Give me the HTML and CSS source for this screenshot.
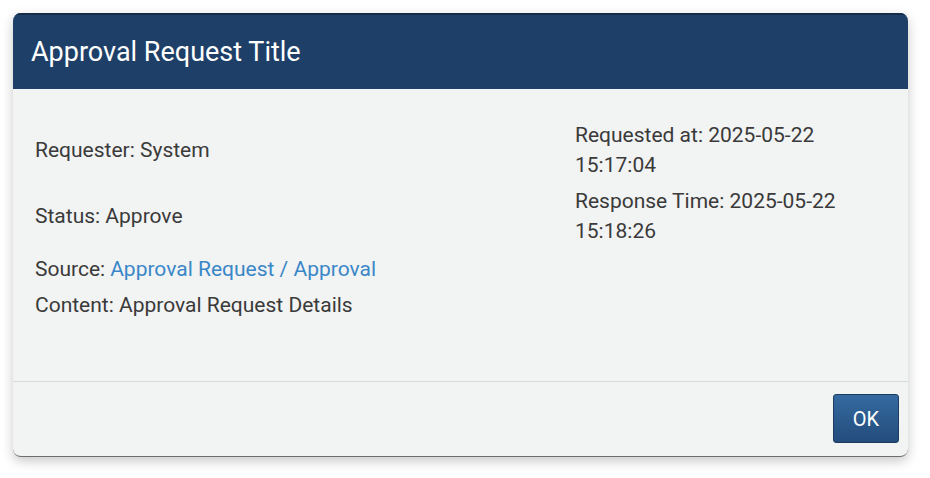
FILE: index.html
```html
<!DOCTYPE html>
<html lang="en">
<head>
  <meta charset="UTF-8" />
  <title>Approval Request</title>
  <link rel="stylesheet" href="styles.css">
</head>
<body>

  <div class="dialog">
    <div class="dialog-header">
      <h2>Approval Request Title</h2>
    </div>

    <div class="dialog-body">
      <div class="info-grid">
        <div class="cell">Requester: System</div>
        <div class="cell right">Requested at: 2025-05-22 15:17:04</div>
        <div class="cell">Status: Approve</div>
        <div class="cell right">Response Time: 2025-05-22 15:18:26</div>
        <div class="cell extra">Source: <a href="#">Approval Request / Approval</a></div>
        <div class="cell right"></div>
        <div class="cell">Content: Approval Request Details</div>
        <div class="cell right"></div>
      </div>
    </div>

    <div class="dialog-footer">
      <button type="button">OK</button>
    </div>
  </div>

</body>
</html>
```

FILE: styles.css
```css
body {
  margin: 0;
  padding: 13px 22px 21px 13px;
  background-color: #ffffff;
  font-family: Roboto, "Liberation Sans", sans-serif;
}

.dialog {
  width: 895px;
  height: 444px;
  display: flex;
  flex-direction: column;
  background: #f2f3f3;
  border-radius: 8px;
  border-bottom: 1px solid #6b6f72;
  box-sizing: border-box;
  overflow: hidden;
  box-shadow: 0 4px 12px rgba(0,0,0,0.22);
}

.dialog-header {
  height: 76px;
  background-color: #1e4068;
  border-top: 2px solid #142c48;
  box-sizing: border-box;
  display: flex;
  align-items: center;
  padding: 0 18px;
}

.dialog-header h2 {
  margin: 0;
  margin-top: -1px;
  color: #ffffff;
  font-size: 27px;
  font-weight: 400;
}

.dialog-body {
  height: 293px;
  box-sizing: border-box;
  padding: 31px 22px 0 22px;
  border-bottom: 1px solid #d9dcdd;
}

.info-grid {
  display: grid;
  grid-template-columns: 540px 300px;
  row-gap: 6px;
  font-size: 21px;
  line-height: 30px;
  color: #3a3a3a;
}

.cell {
  display: flex;
  align-items: center;
}

.cell.extra {
  margin-top: 2px;
}

.cell.right {
  display: block;
}

.cell a {
  color: #3a87c8;
  text-decoration: none;
  margin-left: 5px;
}

.dialog-footer {
  flex: 1;
  display: flex;
  justify-content: flex-end;
  align-items: flex-start;
  padding: 12px 9px 0 0;
}

button {
  width: 66px;
  height: 49px;
  font-family: Roboto, "Liberation Sans", sans-serif;
  font-size: 20px;
  color: #ffffff;
  background: linear-gradient(#356aa0, #234c7c);
  border: 1px solid #1c3c62;
  border-radius: 3px;
  cursor: pointer;
}
```
